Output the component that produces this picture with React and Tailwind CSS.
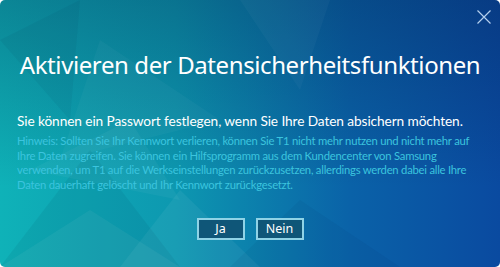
export default function App() {
  return (
    <div className="w-[500px] h-[267px] bg-white">
      <div
        className="relative w-[500px] h-[267px] overflow-hidden rounded-[5px] bg-[linear-gradient(180deg,rgba(0,20,60,0.28)_0%,rgba(0,20,60,0)_70%),linear-gradient(90deg,#0fb2b8_0%,#0d98b0_35%,#0a62a8_70%,#0a4aa0_100%)]"
        style={{ fontFamily: '"Noto Sans", "Open Sans", sans-serif' }}
      >
        <svg className="absolute inset-0" width="500" height="267" viewBox="0 0 500 267">
          <polygon points="0,267 90,210 180,267" fill="#ffffff" opacity="0.05" />
          <polygon points="90,150 180,267 0,267" fill="#003050" opacity="0.08" />
          <polygon points="30,170 130,120 180,200" fill="#ffffff" opacity="0.04" />
          <polygon points="180,190 260,267 120,267" fill="#ffffff" opacity="0.05" />
          <polygon points="100,40 220,120 60,160" fill="#ffffff" opacity="0.03" />
          <polygon points="240,0 330,0 300,90" fill="#ffffff" opacity="0.03" />
          <polygon points="300,200 400,267 230,267" fill="#002050" opacity="0.06" />
          <polygon points="0,40 80,0 70,120" fill="#002040" opacity="0.06" />
        </svg>

        <button className="absolute right-[8px] top-[9px] w-[16px] h-[16px] flex items-center justify-center">
          <svg width="16" height="16" viewBox="0 0 16 16">
            <path d="M1.5 1.5 L14.5 14.5 M14.5 1.5 L1.5 14.5" stroke="#b4cfee" strokeWidth="1.2" fill="none" />
          </svg>
        </button>

        <div className="relative flex flex-col">
          <h1 className="mt-[50px] text-center text-white text-[24px] leading-[30px] font-normal tracking-[-0.4px]">
            Aktivieren der Datensicherheitsfunktionen
          </h1>
          <p className="mt-[32px] px-[17px] text-white text-[13.7px] leading-[18px] tracking-[-0.1px] whitespace-nowrap" style={{ fontFamily: 'Lato, sans-serif' }}>
            Sie können ein Passwort festlegen, wenn Sie Ihre Daten absichern möchten.
          </p>
          <p className="mt-[4px] pl-[17px] pr-[20px] text-[#3bc4de] text-[11.3px] leading-[14.5px] tracking-[-0.25px]" style={{ fontFamily: 'Lato, sans-serif' }}>
            Hinweis: Sollten Sie Ihr Kennwort verlieren, können Sie T1 nicht mehr nutzen und nicht mehr auf Ihre Daten zugreifen. Sie können ein Hilfsprogramm aus dem Kundencenter von Samsung verwenden, um T1 auf die Werkseinstellungen zurückzusetzen, allerdings werden dabei alle Ihre Daten dauerhaft gelöscht und Ihr Kennwort zurückgesetzt.
          </p>
          <div className="mt-[26px] flex justify-center gap-[11px]">
            <button className="w-[48px] h-[22px] border-2 border-[#8fd3e6] bg-[#0f5678] text-white text-[12.5px] leading-[18px]">
              Ja
            </button>
            <button className="w-[48px] h-[22px] border-2 border-[#8fd3e6] bg-[#0f5678] text-white text-[12.5px] leading-[18px]">
              Nein
            </button>
          </div>
        </div>
      </div>
    </div>
  );
}
